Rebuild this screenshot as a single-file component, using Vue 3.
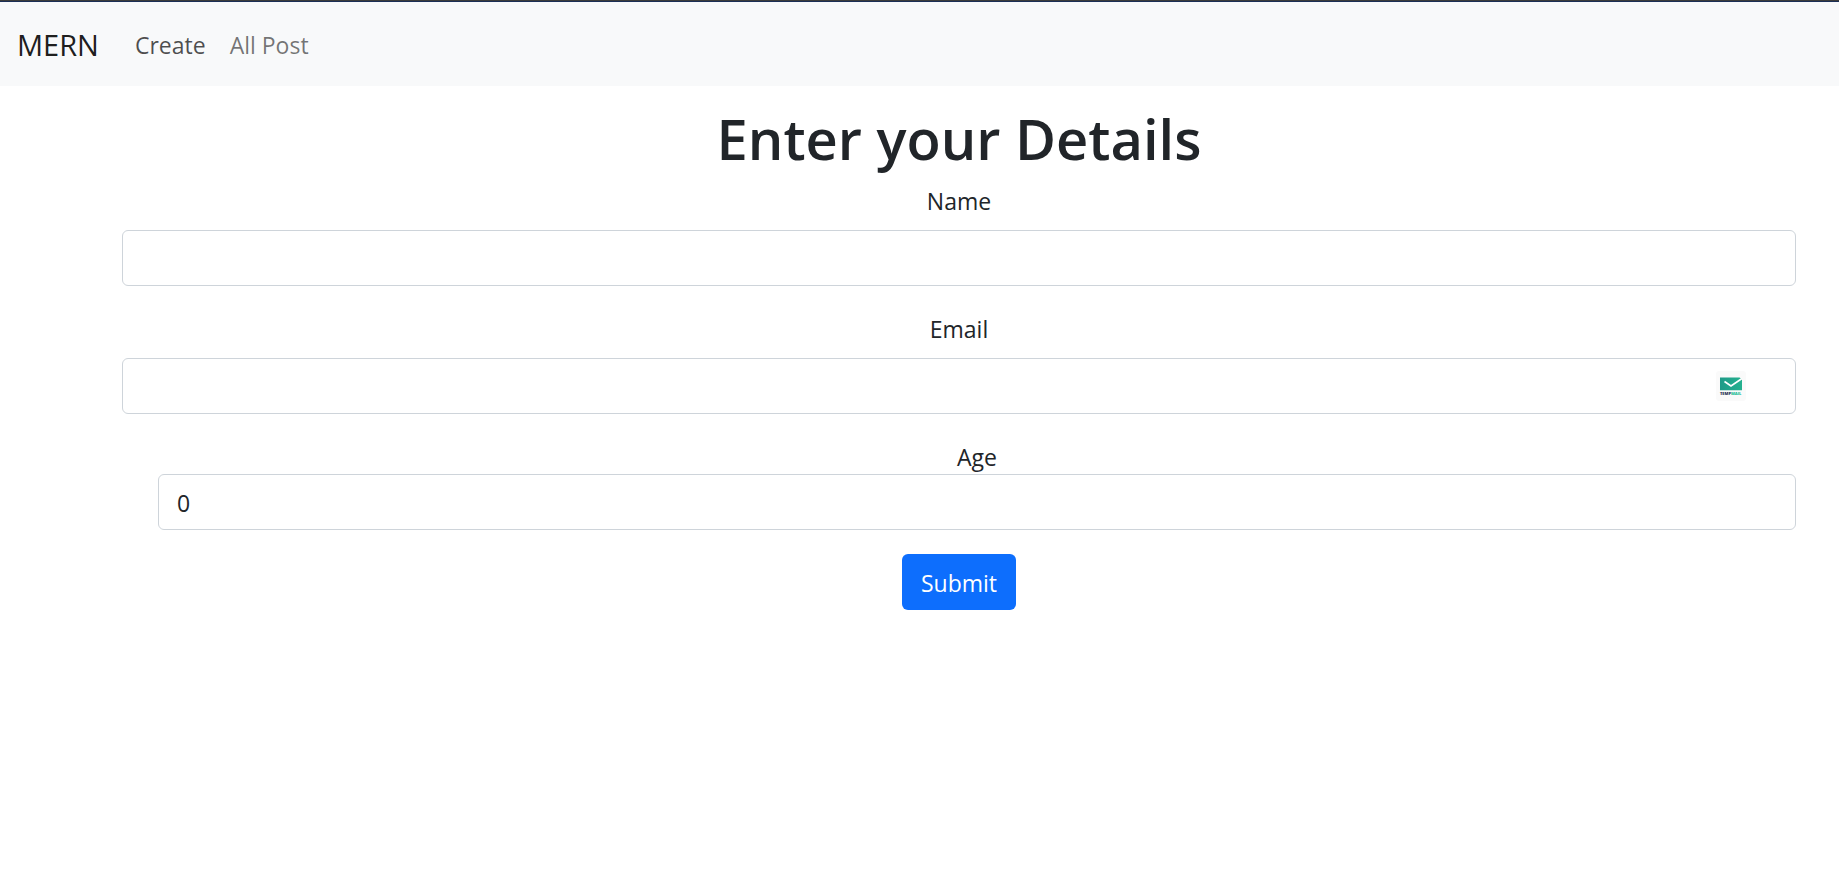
<script setup>
import { reactive } from 'vue'

const form = reactive({ name: '', email: '', age: 0 })
</script>

<template>
  <div class="page">
    <nav class="navbar">
      <a class="brand" href="#">MERN</a>
      <a class="nav-link active" href="#create">Create</a>
      <a class="nav-link" href="#all">All Post</a>
    </nav>

    <main class="container">
      <h1>Enter your Details</h1>
      <form @submit.prevent>
        <div class="field">
          <label for="name">Name</label>
          <input id="name" v-model="form.name" type="text" />
        </div>
        <div class="field">
          <label for="email">Email</label>
          <div class="email-box">
            <input id="email" v-model="form.email" type="email" />
            <svg class="mail-icon" viewBox="0 0 30 30" aria-hidden="true">
              <defs>
                <linearGradient id="mail" x1="0" x2="1" y1="0" y2="0">
                  <stop offset="0" stop-color="#1f9a88" />
                  <stop offset="1" stop-color="#25b18f" />
                </linearGradient>
              </defs>
              <rect width="30" height="30" rx="3" fill="#fafafa" />
              <path d="M4 6.5H23.5L26 8V19.3H4Z" fill="url(#mail)" />
              <path d="M8.5 10.5L15 15L26 7.5" fill="none" stroke="#fff" stroke-width="1.7" />
              <text x="4" y="24" font-size="4" font-weight="800" fill="#232b50">TEMP<tspan fill="#23bd94">MAIL</tspan></text>
            </svg>
          </div>
        </div>
        <div class="field age">
          <label for="age">Age</label>
          <input id="age" v-model="form.age" type="number" />
        </div>
        <button type="submit">Submit</button>
      </form>
    </main>
  </div>
</template>

<style>
body {
  margin: 0;
  background: #fff;
}
</style>

<style scoped>
.page {
  font-family: "Segoe UI", "Open Sans", "Noto Sans", sans-serif;
  font-size: 23px;
  line-height: 36px;
  color: #212529;
  border-top: 1px solid #3b3b3b;
}
.navbar {
  display: flex;
  align-items: center;
  box-sizing: border-box;
  height: 85px;
  padding: 2px 17px 0;
  border-top: 1px solid #1b2f55;
  background: #f8f9fa;
}
.navbar a {
  text-decoration: none;
}
.brand {
  margin-right: 24px;
  font-size: 29px;
  color: rgba(0, 0, 0, 0.9);
}
.nav-link {
  padding: 12px;
  color: rgba(0, 0, 0, 0.55);
}
.nav-link.active {
  color: rgba(0, 0, 0, 0.7);
}
.container {
  padding: 16px 43px 24px 122px;
  text-align: center;
}
h1 {
  margin: 0 0 8px;
  font-size: 56px;
  line-height: 72px;
  font-weight: 600;
}
.field {
  margin-bottom: 24px;
}
.field label {
  display: block;
  padding-top: 1px;
  margin-bottom: 11px;
}
.field input {
  display: block;
  box-sizing: border-box;
  width: 100%;
  height: 56px;
  margin: 0;
  padding: 10px 18px 8px;
  border: 1px solid #ced4da;
  border-radius: 6px;
  background: #fff;
  font: inherit;
  color: inherit;
  outline: none;
  appearance: textfield;
}
.email-box {
  position: relative;
}
.mail-icon {
  position: absolute;
  top: 13px;
  right: 50px;
  width: 30px;
  height: 30px;
  font-family: "Open Sans", sans-serif;
}
.age {
  margin-left: 36px;
}
.field.age label {
  padding-top: 2px;
  margin-bottom: 0;
  line-height: 34px;
}
button {
  height: 56px;
  padding: 2px 19px 0;
  border: 0;
  border-radius: 6px;
  background: #0d6efd;
  color: #fff;
  font: inherit;
  cursor: pointer;
}
</style>
